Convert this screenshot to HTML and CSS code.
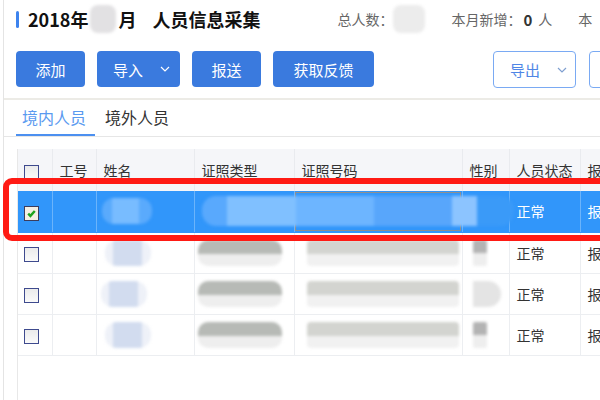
FILE: index.html
```html
<!DOCTYPE html>
<html lang="zh">
<head>
<meta charset="utf-8">
<link rel="stylesheet" href="styles.css">
</head>
<body>
<div class="page">
  <div class="top">
    <div class="title-row">
      <span class="accent"></span>
      <h1 class="title">2018年<span class="blur-month"></span>月<span class="title-gap"></span>人员信息采集</h1>
      <div class="stats">
        <span class="stat">总人数：<span class="blur-num"></span></span>
        <span class="stat">本月新增：<b>0</b> 人</span>
        <span class="stat">本</span>
      </div>
    </div>
    <div class="btn-row">
      <button class="btn w69">添加</button>
      <button class="btn w83 drop">导入<svg class="chev" viewBox="0 0 10 6"><path d="M1 1l4 4 4-4"/></svg></button>
      <button class="btn w69">报送</button>
      <button class="btn w101">获取反馈</button>
      <button class="btn-out w83 push">导出<svg class="chev" viewBox="0 0 10 6"><path d="M1 1l4 4 4-4"/></svg></button>
      <button class="btn-out w83"></button>
    </div>
  </div>
  <div class="tabs">
    <span class="tab active">境内人员</span>
    <span class="tab">境外人员</span>
  </div>
  <div class="table-wrap">
    <table class="grid">
      <colgroup>
        <col class="c1"><col class="c2"><col class="c3"><col class="c4"><col class="c5"><col class="c6"><col class="c7"><col class="c8">
      </colgroup>
      <thead>
        <tr><th><span class="cb"></span></th><th>工号</th><th>姓名</th><th>证照类型</th><th>证照号码</th><th>性别</th><th>人员状态</th><th>报送状态</th></tr>
      </thead>
      <tbody>
        <tr class="sel">
          <td><span class="cb checked"><svg viewBox="0 0 10 10"><path d="M2 5.2l2 2 4-4.5"/></svg></span></td>
          <td></td>
          <td><span class="blob name-sel"></span></td>
          <td class="ovf"><span class="blob cert-sel"></span></td>
          <td class="boxed"></td>
          <td></td>
          <td>正常</td>
          <td>报送</td>
        </tr>
        <tr>
          <td><span class="cb"></span></td><td></td>
          <td><span class="blob name"></span></td>
          <td><span class="blob ctype"></span></td>
          <td><span class="blob cnum"></span></td>
          <td><span class="blob sex"></span></td>
          <td>正常</td><td>报送</td>
        </tr>
        <tr>
          <td><span class="cb"></span></td><td></td>
          <td><span class="blob name n2"></span></td>
          <td><span class="blob ctype"></span></td>
          <td><span class="blob cnum"></span></td>
          <td><span class="blob sex light"></span></td>
          <td>正常</td><td>报送</td>
        </tr>
        <tr>
          <td><span class="cb"></span></td><td></td>
          <td><span class="blob name"></span></td>
          <td><span class="blob ctype"></span></td>
          <td><span class="blob cnum"></span></td>
          <td><span class="blob sex"></span></td>
          <td>正常</td><td>报送</td>
        </tr>
      </tbody>
    </table>
  </div>
  <div class="highlight"></div>
</div>
</body>
</html>
```

FILE: styles.css
```css
* { box-sizing: border-box; }
html, body { margin: 0; padding: 0; background: #fff; width: 600px; height: 400px; overflow: hidden; }
body { font-family: "Noto Sans CJK SC", "Noto Sans", sans-serif; color: #333; }

.page { position: relative; margin-left: 3px; border-left: 1px solid #e4e4e4; height: 400px; }

.top { padding: 0 0 10px 12px; border-bottom: 2px solid #ecebe6; }
.title-row { height: 38px; display: flex; align-items: center; white-space: nowrap; }
.accent { width: 3px; height: 17px; background: #3d83ee; border-radius: 2px; margin-right: 9px; flex: none; }
.title { margin: 0; font-size: 18px; font-weight: 700; color: #111; display: flex; align-items: center; flex: none; }
.title-gap { display: inline-block; width: 16px; }
.blur-month { display: inline-block; width: 26px; height: 28px; margin: 0 2px; background: #e2e1e3; border-radius: 8px; filter: blur(1.5px); }
.stats { display: flex; align-items: center; margin-left: 77px; font-size: 14px; color: #666; flex: none; }
.stat { display: flex; align-items: center; margin-right: 26px; }
.stat b { color: #333; font-size: 15px; margin: 0 6px 0 2px; }
.blur-num { display: inline-block; width: 32px; height: 28px; background: #ececec; border-radius: 8px; filter: blur(1.5px); }

.btn-row { display: flex; margin-top: 13px; white-space: nowrap; }
.btn { height: 36px; border: none; border-radius: 4px; background: #3a7ade; color: #fff; font-family: inherit; font-size: 15px; margin-right: 12px; padding: 0; display: flex; align-items: center; justify-content: center; flex: none; }
.btn-out { height: 37px; border: 1.5px solid #7aaaf3; border-radius: 4px; background: #fff; color: #4f86e6; font-family: inherit; font-size: 15px; margin-right: 13px; padding: 0; display: flex; align-items: center; justify-content: center; flex: none; }
.w69 { width: 69px; }
.w83 { width: 83px; }
.w101 { width: 101px; }
.push { margin-left: 107px; }
.drop, .btn-out.push { justify-content: flex-start; padding-left: 16px; }
.chev { width: 10px; height: 6px; margin-left: 17px; fill: none; stroke: #fff; stroke-width: 1.2; }
.btn-out .chev { stroke: #7f9fd0; }

.tabs { display: flex; padding-left: 12px; border-bottom: 1px solid #e6e6e6; height: 37px; }
.tab { font-size: 16px; padding: 4px 9px 0 6px; margin-right: 4px; color: #333; line-height: 27px; }
.tab.active { color: #5a9af0; border-bottom: 2px solid #4c90f0; }

.table-wrap { margin: 12px 0 0 13px; border-left: 1px solid #e8e8e8; height: 260px; overflow: hidden; }
.grid { border-collapse: collapse; table-layout: fixed; width: 640px; font-size: 14px; }
.c1 { width: 34px; } .c2 { width: 44px; } .c3 { width: 98px; } .c4 { width: 100px; }
.c5 { width: 168px; } .c6 { width: 47px; } .c7 { width: 71px; } .c8 { width: 78px; }
.grid th { height: 42px; background: #f5f6f9; font-weight: 400; text-align: left; padding: 0 7px; border-right: 1px solid #e9ebef; color: #333; white-space: nowrap; }
.grid td { height: 41px; padding: 0 7px; border-right: 1px solid #eceef1; border-bottom: 1px solid #eceef1; white-space: nowrap; color: #333; }
.grid th:first-child, .grid td:first-child { padding-left: 6px; }
.grid tr.sel td { background: #3196fa; color: #fff; border-right-color: #6bb4fb; border-bottom: 1px solid #3196fa; height: 41px; }
.grid tr.sel td.boxed { outline: 1px solid #8f8f8f; outline-offset: -2px; }
.ovf { overflow: visible; }

.cb { display: inline-block; width: 15px; height: 15px; border: 1.5px solid #3e4a8e; background: linear-gradient(#ebebeb, #fafafa); vertical-align: middle; }
.cb.checked { background: #f4efe4; border-color: #3c3c5c; display: inline-flex; align-items: center; justify-content: center; }
.cb svg { width: 11px; height: 11px; fill: none; stroke: #1fa31f; stroke-width: 2.2; }

.blob { display: block; border-radius: 12px; filter: blur(1.5px); }
.name-sel { width: 50px; height: 26px; margin-left: -2px; background: linear-gradient(90deg, #5aaafc 0 20%, #78bcff 20% 75%, #5aaafc 75%); }
.cert-sel { position: relative; z-index: 1; width: 312px; height: 30px; background: linear-gradient(90deg, #59a9fd 0 8%, #80c0ff 8% 30%, #6db5ff 30% 55%, #58a6fb 55% 80%, #8cc4ff 80% 88%, #3a9af8 88%); border-radius: 14px; margin-left: 0; }
.name { width: 46px; height: 26px; margin-left: 1px; background: linear-gradient(90deg, #eef1f8 0 18%, #d2dcef 18% 80%, #eef1f8 80%); }
.n2 { margin-left: -3px; }
.ctype { width: 84px; height: 26px; margin-left: -4px; border-radius: 10px; background: linear-gradient(#b7bab6 0 55%, #eeeeee 55%); }
.cnum { width: 152px; height: 26px; margin-left: 5px; border-radius: 4px; background: linear-gradient(#d3d4d0 0 55%, #f1f1f1 55%); }
.sex { width: 14px; height: 26px; margin-left: 3px; border-radius: 2px; background: linear-gradient(#b3b3b3 0 50%, #eeeeee 50%); }
.sex.light { width: 28px; border-radius: 0 14px 14px 0; background: #e4e4e4; }

.highlight { position: absolute; left: -1px; top: 178px; width: 620px; height: 63px; border: 6px solid #ff1a14; border-radius: 9px; pointer-events: none; z-index: 5; }
```
